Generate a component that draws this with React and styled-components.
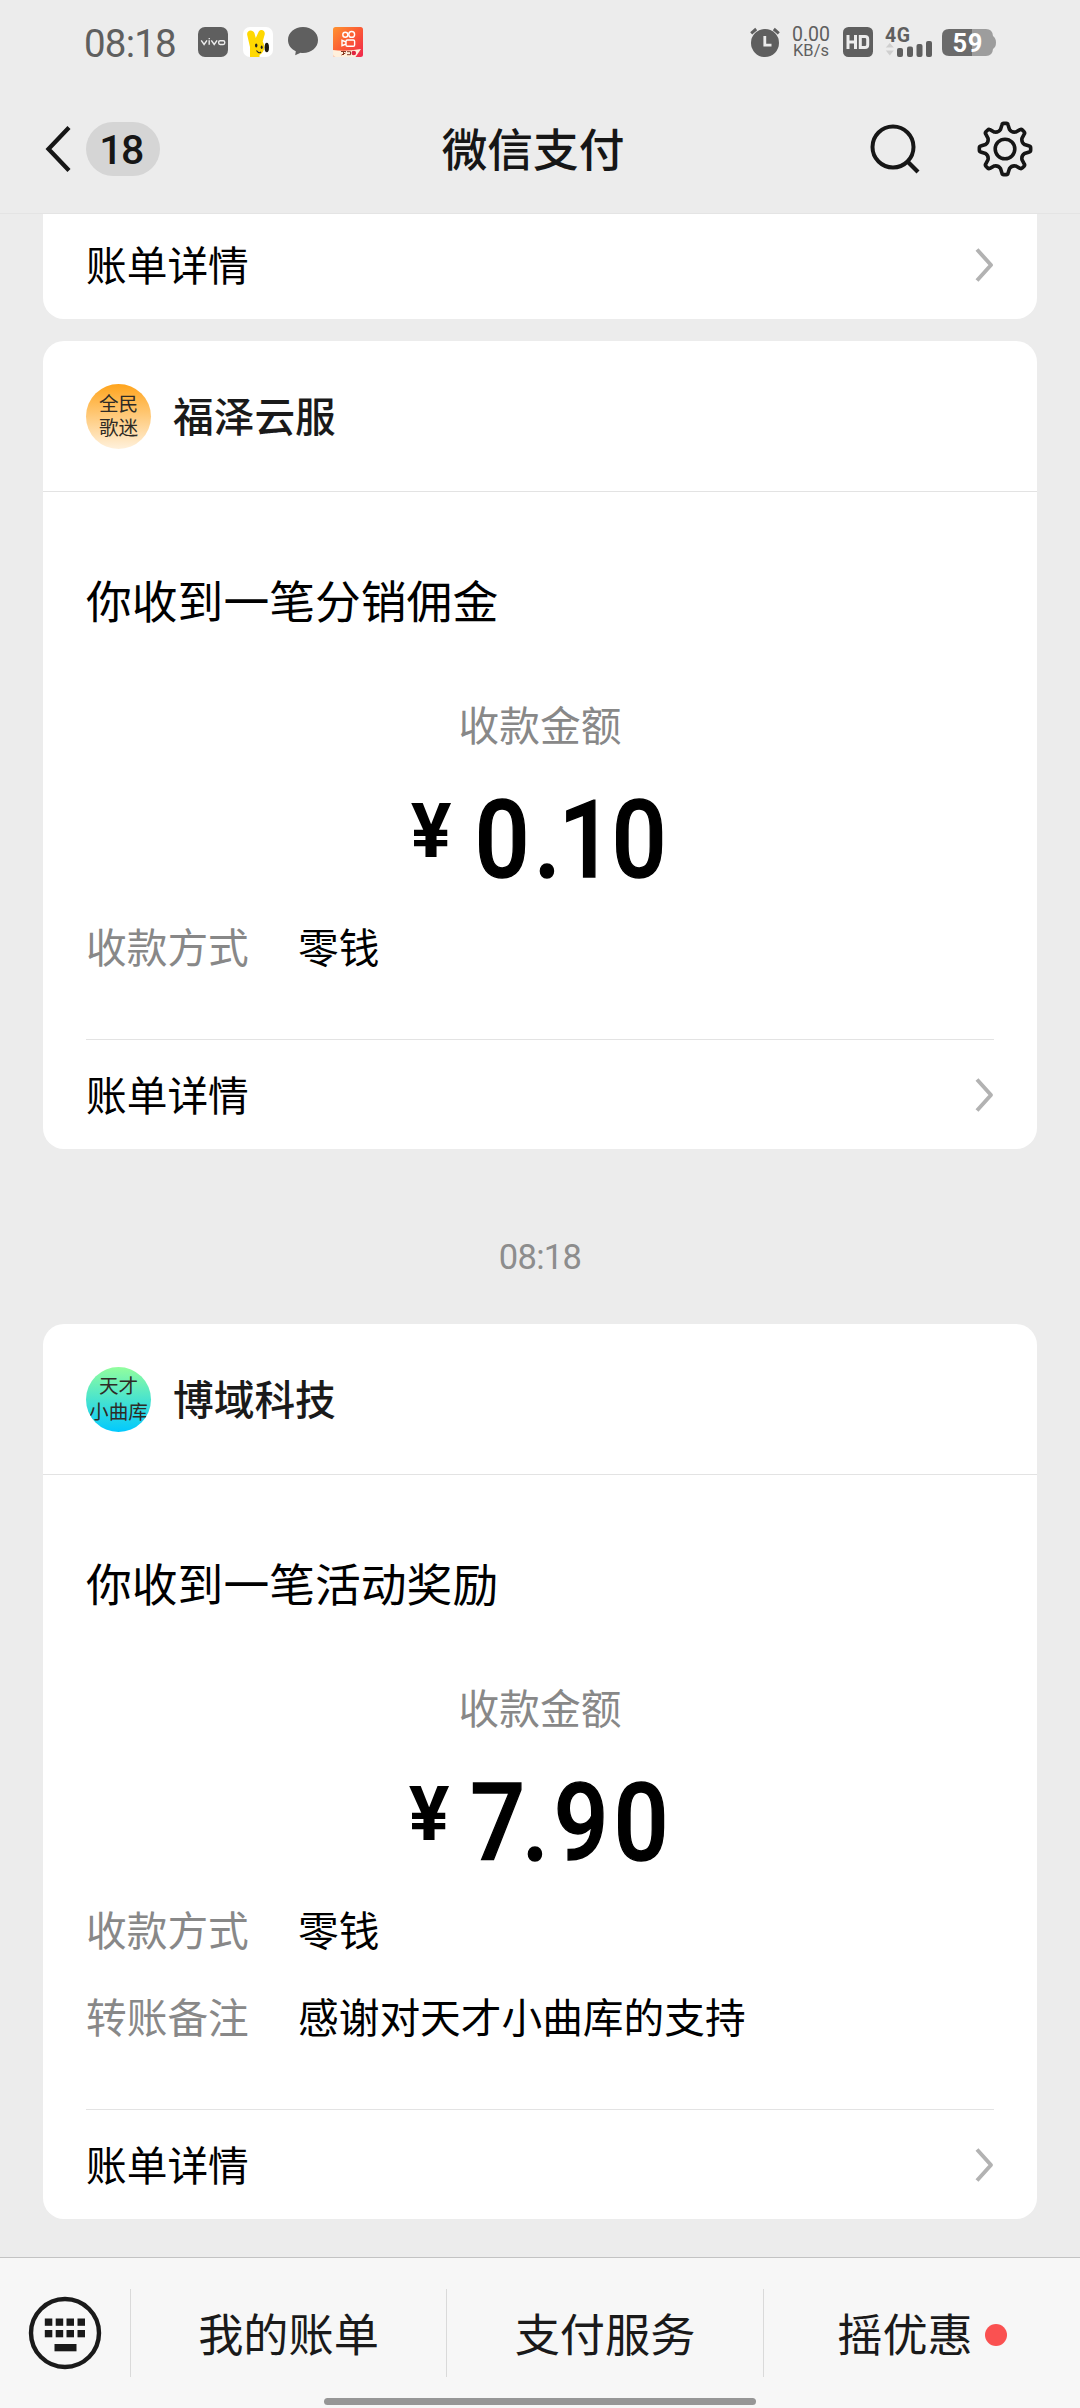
import React from "react";
import styled, { createGlobalStyle } from "styled-components";

const cjk = `"Noto Sans CJK SC", sans-serif`;
const latin = `Roboto, "Noto Sans CJK SC", sans-serif`;

const Global = createGlobalStyle`
  * { box-sizing: border-box; }
  body { margin: 0; background: #ececec; }
  svg { display: block; flex: none; overflow: visible; }
`;

const Screen = styled.div`
  width: 1080px;
  height: 2408px;
  display: flex;
  flex-direction: column;
  background: #ececec;
  font-family: ${cjk};
  color: #000;
  overflow: hidden;
`;

const StatusBar = styled.div`
  height: 84px;
  flex: none;
  display: flex;
  align-items: center;
  justify-content: space-between;
  padding: 0 84px 0 84px;
  color: #5f5f5f;
`;
const StatusGroup = styled.div`
  display: flex;
  align-items: center;
  gap: ${(p) => p.$gap}px;
`;
const Clock = styled.span`
  width: 99px;
  font: 400 38.5px/44px ${latin};
  letter-spacing: -0.8px;
  padding-top: 4px;
`;
const Speed = styled.div`
  width: 41px;
  padding-right: 5px;
  display: flex;
  flex-direction: column;
  align-items: center;
  font: 400 19.5px/17px ${latin};
  white-space: nowrap;
`;
const SpeedUnit = styled.span`
  font-size: 16.5px;
  line-height: 15px;
`;

const NavBar = styled.div`
  height: 130px;
  flex: none;
  display: grid;
  grid-template-columns: 340px 1fr 340px;
  align-items: center;
  border-bottom: 1px solid #e4e4e4;
`;
const NavLeft = styled.div`
  display: flex;
  align-items: center;
  padding-left: 44px;
  gap: 14px;
`;
const UnreadPill = styled.span`
  width: 74px;
  height: 54px;
  border-radius: 27px;
  background: #d5d5d5;
  color: #161616;
  font: 500 41px/56px ${latin};
  letter-spacing: -1.6px;
  padding-right: 4px;
  text-align: center;
`;
const NavTitle = styled.h1`
  margin: 0;
  padding: 0 14px 4px 0;
  font-size: 45.7px;
  line-height: 60px;
  font-weight: 500;
  color: #161616;
  text-align: center;
`;
const NavRight = styled.div`
  display: flex;
  align-items: center;
  justify-content: flex-end;
  gap: 56px;
  padding-right: 47px;
`;

const Feed = styled.main`
  flex: 1;
  min-height: 0;
  padding: 0 43px;
`;
const Card = styled.section`
  background: #fff;
  border-radius: ${(p) => (p.$cut ? "0 0 21px 21px" : "21px")};
  margin-bottom: ${(p) => p.$after || 0}px;
`;
const CardHeader = styled.header`
  height: 151px;
  display: flex;
  align-items: center;
  gap: 22px;
  padding: 0 43px;
  border-bottom: 1px solid #e3e3e3;
`;
const Avatar = styled.div`
  width: 65px;
  height: 65px;
  border-radius: 50%;
  overflow: hidden;
  display: flex;
  flex-direction: column;
  align-items: center;
  justify-content: center;
  background: linear-gradient(${(p) => p.$from}, ${(p) => p.$to});
  color: #2e2b26;
  font-size: 19.6px;
  line-height: ${(p) => p.$leading}px;
  padding-bottom: 3px;
  white-space: nowrap;
`;
const Merchant = styled.span`
  font-size: 40.7px;
  line-height: 54px;
  font-weight: 500;
  color: #1a1a1a;
  padding-bottom: 3px;
`;
const CardBody = styled.div`
  padding: 77px 43px 50px;
`;
const Headline = styled.h2`
  margin: 0 0 65px;
  font-size: 45.8px;
  line-height: 60px;
  font-weight: 400;
`;
const AmountLabel = styled.div`
  text-align: center;
  font-size: 40.7px;
  line-height: 60px;
  color: #888;
`;
const Amount = styled.div`
  height: 148px;
  display: flex;
  justify-content: center;
  align-items: flex-start;
  font-family: ${latin};
  font-weight: 500;
`;
const Yen = styled.span`
  width: 39px;
  display: flex;
  justify-content: center;
  font-size: 76px;
  line-height: 76px;
  font-weight: 700;
  margin: 39px 21px 0 0;
`;
const Digits = styled.span`
  display: flex;
  font-size: 107px;
  line-height: 108px;
  margin-top: 33px;
`;
const Digit = styled.span`
  width: ${(p) => p.$width}px;
  padding-left: ${(p) => p.$nudge}px;
  display: flex;
  justify-content: center;
  transform: scaleX(0.9);
  -webkit-text-stroke: 1.4px #000;
`;
const Field = styled.div`
  height: 87px;
  display: flex;
  align-items: center;
  font-size: 40.7px;
  line-height: 60px;
`;
const FieldName = styled.span`
  width: 212px;
  color: #888;
`;
const CardFooter = styled.footer`
  height: ${(p) => (p.$cut ? 105 : 110)}px;
  margin: 0 43px;
  display: flex;
  align-items: center;
  justify-content: space-between;
  padding-bottom: ${(p) => (p.$cut ? 4 : 0)}px;
  border-top: ${(p) => (p.$cut ? "none" : "1px solid #e3e3e3")};
  font-size: 40.7px;
  line-height: 60px;
`;
const FooterText = styled.span`
  margin-top: -2px;
`;
const TimeStamp = styled.time`
  display: block;
  height: 175px;
  text-align: center;
  font: 400 34.5px/216px ${latin};
  letter-spacing: -0.7px;
  color: #8d8d8d;
`;

const MenuBar = styled.nav`
  height: 151px;
  flex: none;
  display: flex;
  flex-direction: column;
  align-items: center;
  background: #f7f7f7;
  border-top: 1px solid #c3c3c3;
`;
const MenuItems = styled.div`
  width: 100%;
  height: 140px;
  padding-top: 31px;
  display: grid;
  grid-template-columns: 130px 316px 317px 317px;
`;
const MenuItem = styled.div`
  height: 88px;
  display: flex;
  align-items: center;
  justify-content: center;
  gap: 12px;
  border-left: ${(p) => (p.$first ? "none" : "1px solid #dadada")};
  font-size: 45.2px;
  line-height: 60px;
  color: #1a1a1a;
`;
const MenuText = styled.span`
  margin-top: -1px;
`;
const Dot = styled.i`
  width: 22px;
  height: 22px;
  border-radius: 50%;
  background: #fa5151;
  margin-top: 3px;
`;
const HomeBar = styled.div`
  width: 432px;
  height: 7px;
  border-radius: 4px;
  background: #969696;
`;

const VivoIcon = () => (
  <svg width="30" height="30" viewBox="0 0 30 30">
    <rect width="30" height="30" rx="7" fill="#5f5f5f" />
    <g fill="none" stroke="#ececec" strokeWidth="1.4">
      <path d="M3.2 13.3l2.9 4.2 2.9-4.2M11.2 13.2v4.6M13.3 13.3l2.9 4.2 2.9-4.2" />
      <rect x="20.7" y="13.7" width="6" height="3.8" rx="1.4" />
      <path d="M10.6 11.6h1.3" />
    </g>
  </svg>
);
const BeeIcon = () => (
  <svg width="30" height="30" viewBox="0 0 30 30">
    <rect width="30" height="30" rx="7" fill="#fff" />
    <path d="M7 30V20L4.200 8C3.400 2.500 10 2 11.400 6L12.800 11L15.500 5C17.500 1.500 22.500 3 21.700 7.500L19.700 14.500C22.500 20 21.500 25 16.500 28V30Z" fill="#ffd800" />
    <ellipse cx="23.800" cy="20.500" rx="2.200" ry="4.700" fill="#1d1a10" />
    <ellipse cx="13.200" cy="18.500" rx="1.200" ry="2" fill="#222" />
    <ellipse cx="18.700" cy="20.300" rx="1" ry="1.700" fill="#222" />
    <path d="M13.500 23.500q2.300 3.500 4.500 1.500" fill="none" stroke="#222" strokeWidth="1.100" />
  </svg>
);
const ChatIcon = () => (
  <svg width="30" height="30" viewBox="0 0 30 30">
    <path d="M15 0C23.500 0 30 5.600 30 13S23.500 26 15 26c-1 0-1.700 0-2.400-.2L7.200 28.300L7.800 24.200C3 22 0 18 0 13C0 5.600 6.500 0 15 0Z" fill="#5f5f5f" />
  </svg>
);
const KuaishouIcon = () => (
  <svg width="30" height="30" viewBox="0 0 30 30">
    <defs>
      <linearGradient id="ks" x1="0" y1="0" x2="1" y2="1">
        <stop offset="0" stopColor="#ff9330" />
        <stop offset=".5" stopColor="#fb5a35" />
        <stop offset="1" stopColor="#f0264d" />
      </linearGradient>
    </defs>
    <rect width="30" height="30" rx="2.500" fill="url(#ks)" />
    <g fill="none" stroke="#fff" strokeWidth="1.400">
      <circle cx="12.300" cy="7.800" r="2.500" />
      <circle cx="18.700" cy="7.400" r="2.900" />
      <rect x="13" y="13" width="8.600" height="6.200" rx="1.300" />
      <path d="M13 15L9 13.400v5.200l4-1.600" />
    </g>
    <path d="M0 23Q12 25 28 22L22.500 30H2.500Q0 30 0 27.500Z" fill="#fff0dc" />
    <g fill="none" stroke="#8a3a24" strokeWidth="1">
      <path d="M8 24.500h5M10.500 24v4M8.500 28l4-2M14 24.700h3.500v3H14" />
    </g>
    <circle cx="20.800" cy="26" r="2.300" fill="#e02440" />
  </svg>
);
const AlarmIcon = () => (
  <svg width="34" height="30" viewBox="0 0 34 30">
    <circle cx="15" cy="16" r="14" fill="#5f5f5f" />
    <path d="M1.200 6.300L6.200 2M28.800 6.300L23.800 2" stroke="#5f5f5f" strokeWidth="3" />
    <path d="M14.800 9v9.200h6.700" fill="none" stroke="#ececec" strokeWidth="2.800" />
  </svg>
);
const HdIcon = () => (
  <svg width="33" height="30" viewBox="0 0 33 30">
    <rect width="30" height="30" rx="5.500" fill="#5f5f5f" />
    <g fill="none" stroke="#ececec" strokeWidth="3">
      <path d="M5 8v14M12.500 8v14M5 15h7.500" />
      <path d="M17.300 9.500H22q2.700 0 2.700 2.500v6q0 2.500-2.700 2.500h-4.700z" />
    </g>
  </svg>
);
const SignalIcon = () => (
  <svg width="48" height="30" viewBox="0 0 48 30">
    <text x="0" y="14.500" fontFamily="Roboto, sans-serif" fontWeight="700" fontSize="19.500" textLength="25" fill="#5f5f5f">4G</text>
    <path d="M0.800 20.500L4.800 16L8.800 20.500zM0.800 23.500L4.800 28.500L8.800 23.500z" fill="#cfcfcf" />
    <g fill="#5f5f5f">
      <rect x="12" y="21" width="6" height="9" rx="2" />
      <rect x="22" y="19.500" width="6" height="10.500" rx="2" />
      <rect x="31.500" y="17" width="6" height="13" rx="2" />
      <rect x="41" y="14" width="6" height="16" rx="2" />
    </g>
  </svg>
);
const BatteryIcon = () => (
  <svg width="54" height="27" viewBox="0 0 54 27">
    <path d="M7 0H30V27H7Q0 27 0 20V7Q0 0 7 0Z" fill="#6b6b6b" />
    <path d="M30 0H44Q50.500 0 51 7Q54 9 54 13.500T51 20Q50.500 27 44 27H30Z" fill="#9d9d9d" />
    <text x="10.500" y="22.700" fontFamily="Roboto, sans-serif" fontWeight="700" fontSize="25.500" textLength="30" fill="#fff">59</text>
  </svg>
);
const BackIcon = () => (
  <svg width="28" height="50" viewBox="0 0 28 50">
    <path d="M25 3.500L4.500 25L25 46.500" fill="none" stroke="#161616" strokeWidth="4.300" />
  </svg>
);
const SearchIcon = () => (
  <svg width="52" height="52" viewBox="0 0 52 52">
    <circle cx="24" cy="24" r="20.500" fill="none" stroke="#161616" strokeWidth="4" />
    <path d="M38.500 38.500L49 49" stroke="#161616" strokeWidth="4.300" />
  </svg>
);

// Eight flared teeth around the ring, each one rotated by 45 degrees.
const gearPath = (() => {
  const pt = (r, deg) => {
    const a = ((deg - 90) * Math.PI) / 180;
    return `${(28 + r * Math.cos(a)).toFixed(2)} ${(28 + r * Math.sin(a)).toFixed(2)}`;
  };
  let d = "";
  for (let i = 0; i < 8; i += 1) {
    const c = i * 45;
    d += `${i ? "L" : "M"}${pt(24.5, c - 7)}Q${pt(25.8, c - 6)} ${pt(25.7, c - 3)}L${pt(25.7, c + 3)}Q${pt(25.8, c + 6)} ${pt(24.5, c + 7)}L${pt(20, c + 13)}Q${pt(17.6, c + 22.5)} ${pt(20, c + 32)}`;
  }
  return `${d}Z`;
})();
const GearIcon = () => (
  <svg width="56" height="56" viewBox="0 0 56 56">
    <path d={gearPath} fill="none" stroke="#161616" strokeWidth="3.600" strokeLinejoin="round" />
    <circle cx="28" cy="28" r="9.800" fill="none" stroke="#161616" strokeWidth="3.600" />
  </svg>
);
const Chevron = () => (
  <svg width="19" height="36" viewBox="0 0 19 36">
    <path d="M2 2.500L16 18L2 33.500" fill="none" stroke="#b2b2b2" strokeWidth="3.900" strokeLinejoin="round" />
  </svg>
);
const KeyboardIcon = () => (
  <svg width="74" height="74" viewBox="0 0 74 74">
    <circle cx="37" cy="37" r="34" fill="none" stroke="#1a1a1a" strokeWidth="4.400" />
    <g fill="#1a1a1a">
      {[22.5, 34].map((y) =>
        [16.8, 27.7, 38.5, 49.5].map((x) => <rect key={`${x}-${y}`} x={x} y={y} width="7.500" height="7.300" />)
      )}
      <rect x="26.500" y="48" width="22" height="7.300" />
    </g>
  </svg>
);

const digitWidths = { ".": 31, 1: 46, 7: 50 };
const digitNudges = { 7: 6 };

const Footer = ({ cut }) => (
  <CardFooter $cut={cut}>
    <FooterText>账单详情</FooterText>
    <Chevron />
  </CardFooter>
);

const PaymentCard = ({ logo, name, headline, amount, fields }) => (
  <Card>
    <CardHeader>
      <Avatar $from={logo.from} $to={logo.to} $leading={logo.leading}>
        {logo.lines.map((line) => (
          <span key={line}>{line}</span>
        ))}
      </Avatar>
      <Merchant>{name}</Merchant>
    </CardHeader>
    <CardBody>
      <Headline>{headline}</Headline>
      <AmountLabel>收款金额</AmountLabel>
      <Amount>
        <Yen>¥</Yen>
        <Digits>
          {[...amount].map((ch, i) => (
            <Digit key={i} $width={digitWidths[ch] || 60} $nudge={digitNudges[ch] || 0}>
              {ch}
            </Digit>
          ))}
        </Digits>
      </Amount>
      {fields.map(([key, value]) => (
        <Field key={key}>
          <FieldName>{key}</FieldName>
          <span>{value}</span>
        </Field>
      ))}
    </CardBody>
    <Footer />
  </Card>
);

export default function App() {
  return (
    <>
      <Global />
      <Screen>
        <StatusBar>
          <StatusGroup $gap={15}>
            <Clock>08:18</Clock>
            <VivoIcon />
            <BeeIcon />
            <ChatIcon />
            <KuaishouIcon />
          </StatusGroup>
          <StatusGroup $gap={9}>
            <AlarmIcon />
            <Speed>
              0.00
              <SpeedUnit>KB/s</SpeedUnit>
            </Speed>
            <HdIcon />
            <SignalIcon />
            <BatteryIcon />
          </StatusGroup>
        </StatusBar>
        <NavBar>
          <NavLeft>
            <BackIcon />
            <UnreadPill>18</UnreadPill>
          </NavLeft>
          <NavTitle>微信支付</NavTitle>
          <NavRight>
            <SearchIcon />
            <GearIcon />
          </NavRight>
        </NavBar>
        <Feed>
          <Card $cut $after={22}>
            <Footer cut />
          </Card>
          <PaymentCard
            logo={{ lines: ["全民", "歌迷"], from: "#ffa41c", to: "#fff1dc", leading: 23.5 }}
            name="福泽云服"
            headline="你收到一笔分销佣金"
            amount="0.10"
            fields={[["收款方式", "零钱"]]}
          />
          <TimeStamp>08:18</TimeStamp>
          <PaymentCard
            logo={{ lines: ["天才", "小曲库"], from: "#92fe9d", to: "#00c9ff", leading: 26 }}
            name="博域科技"
            headline="你收到一笔活动奖励"
            amount="7.90"
            fields={[
              ["收款方式", "零钱"],
              ["转账备注", "感谢对天才小曲库的支持"],
            ]}
          />
        </Feed>
        <MenuBar>
          <MenuItems>
            <MenuItem $first>
              <KeyboardIcon />
            </MenuItem>
            <MenuItem>
              <MenuText>我的账单</MenuText>
            </MenuItem>
            <MenuItem>
              <MenuText>支付服务</MenuText>
            </MenuItem>
            <MenuItem>
              <MenuText>摇优惠</MenuText>
              <Dot />
            </MenuItem>
          </MenuItems>
          <HomeBar />
        </MenuBar>
      </Screen>
    </>
  );
}
